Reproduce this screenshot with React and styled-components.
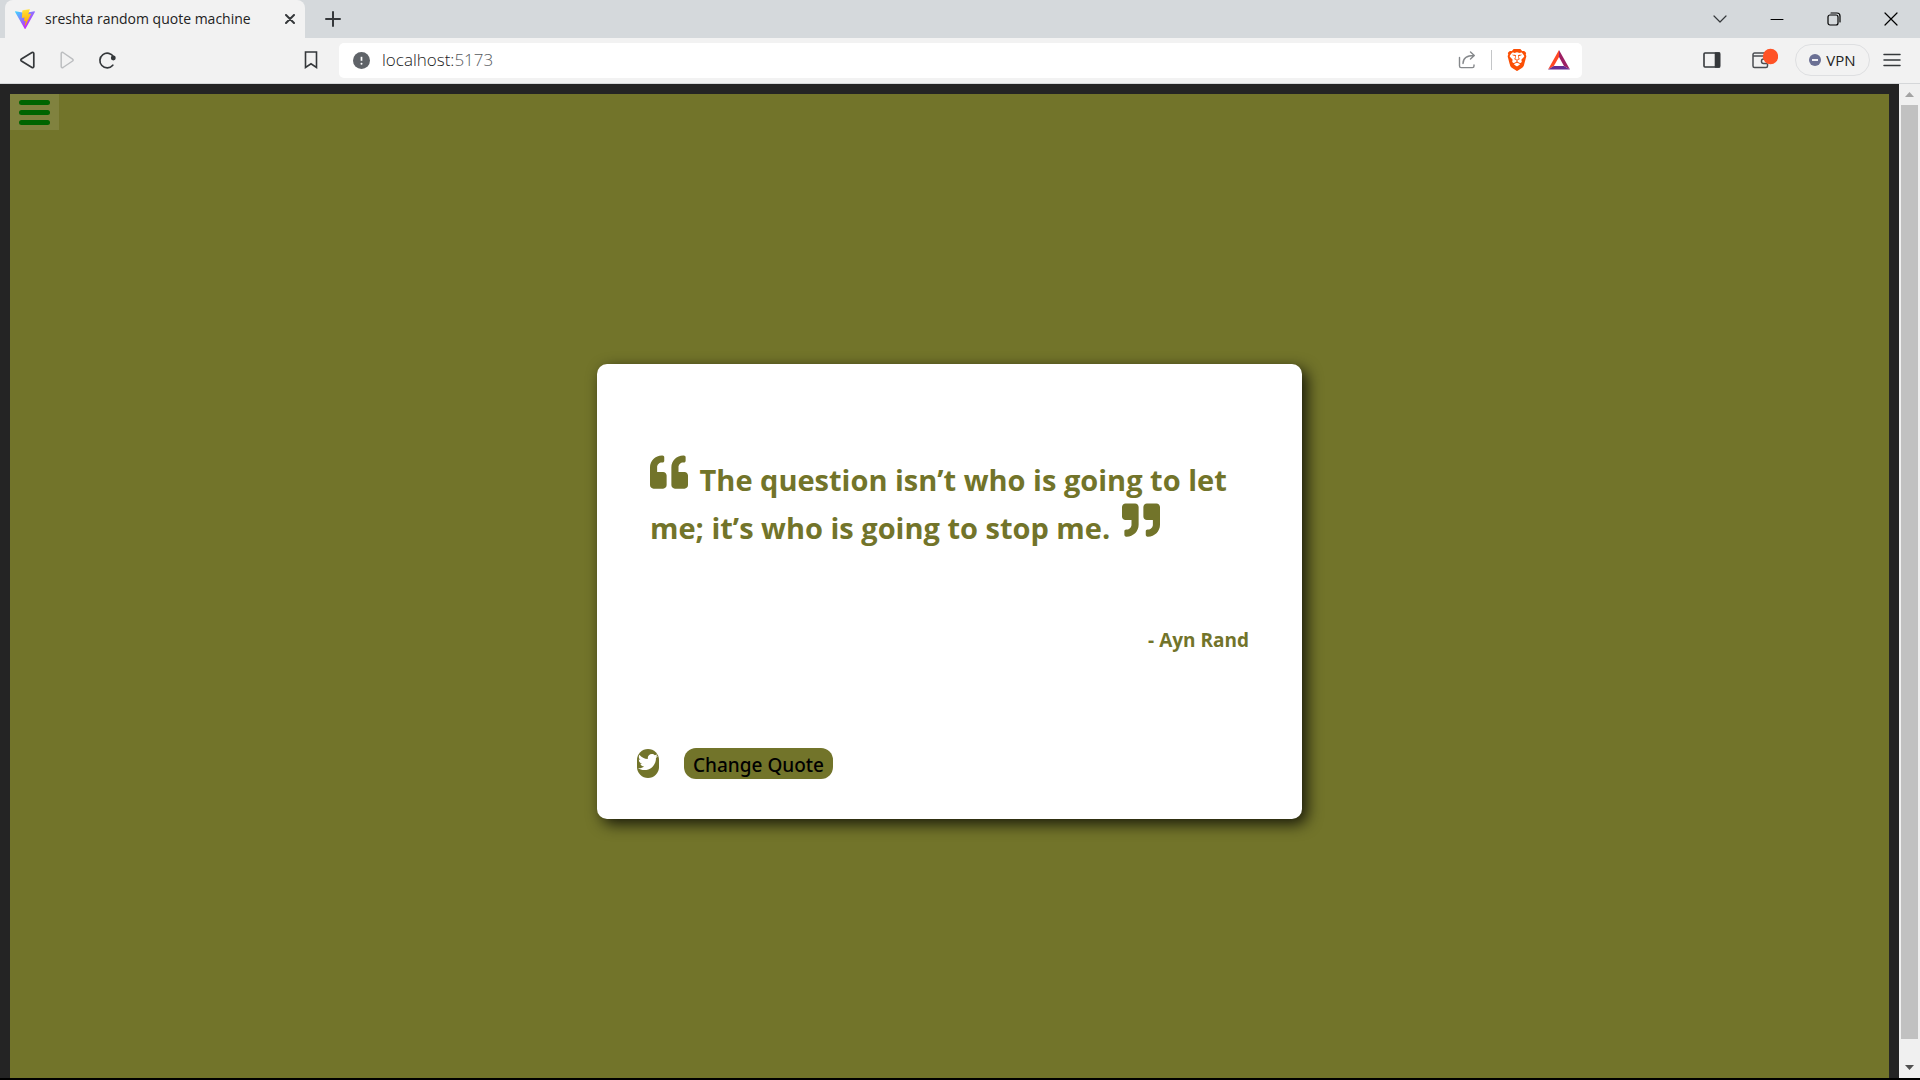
import React from "react";
import styled, { createGlobalStyle } from "styled-components";
import { FaQuoteLeft, FaQuoteRight, FaTwitter } from "react-icons/fa";
import { SiBrave } from "react-icons/si";

const OLIVE = "#72742a";

const GlobalStyle = createGlobalStyle`
  *, *::before, *::after { box-sizing: border-box; }
  body {
    margin: 0;
    font-family: "Open Sans", "Noto Sans", sans-serif;
    background: #000;
  }
  button, input { font: inherit; color: inherit; }
  button { border: 0; padding: 0; background: none; cursor: pointer; }
  svg { display: block; flex: none; }
`;

const Window = styled.div`
  display: flex;
  flex-direction: column;
  height: 100vh;
  padding-bottom: 2px;
  overflow: hidden;
`;

const TabStrip = styled.header`
  display: flex;
  flex: none;
  height: 38px;
  padding: 0 1px 0 5px;
  background: #d5d9dc;
  color: #35383b;
`;

const Tab = styled.div`
  display: flex;
  align-items: center;
  gap: 10px;
  width: 300px;
  padding: 0 10px;
  border-radius: 8px 8px 0 0;
  background: #f2f2f2;
`;

const TabTitle = styled.span`
  flex: 1;
  color: #222;
  font-size: 14px;
  line-height: 20px;
  white-space: nowrap;
`;

const IconButton = styled.button`
  display: grid;
  place-items: center;
  flex: none;
  width: ${(p) => p.$width || 40}px;
  height: ${(p) => p.$height || 36}px;
  color: ${(p) => p.$color || "#35383b"};
`;

const WindowControls = styled.div`
  display: flex;
  margin-left: auto;
  color: #111;
`;

const Toolbar = styled.nav`
  display: flex;
  flex: none;
  align-items: center;
  height: 46px;
  padding: 0 8px 1px 7px;
  border-bottom: 1px solid #d5d7d9;
  background: #f2f2f2;
`;

const NavGroup = styled.div`
  display: flex;
  flex: none;
  width: 284px;
`;

const AddressBar = styled.form`
  display: flex;
  flex: 1;
  align-items: center;
  height: 35px;
  margin: 0 105px 0 8px;
  padding: 0 2px 0 14px;
  border-radius: 5px;
  background: #fff;
`;

const AddressLabel = styled.label`
  position: relative;
  display: flex;
  flex: 1;
  align-items: center;
  gap: 12px;
`;

const AddressInput = styled.input`
  position: absolute;
  inset: 0;
  width: 100%;
  padding: 0 0 0 29px;
  border: 0;
  outline: 0;
  background: transparent;
  color: transparent;
  font-size: 17px;
`;

const AddressText = styled.span`
  color: #222;
  font-size: 17px;
  font-weight: 300;
  line-height: 24px;
`;

const Port = styled.span`
  color: #55595d;
`;

const Divider = styled.span`
  width: 1px;
  height: 20px;
  margin: 0 4px;
  background: #c4c6c8;
`;

const ToolGroup = styled.div`
  display: flex;
  flex: none;
  align-items: center;
`;

const VpnButton = styled.button`
  display: flex;
  align-items: center;
  justify-content: center;
  gap: 5px;
  width: 75px;
  height: 32px;
  margin: 0 2px 0 4px;
  border: 1px solid #dedfe1;
  border-radius: 16px;
  color: #222;
  font-size: 15px;
  line-height: 20px;
`;

const Viewport = styled.div`
  display: flex;
  flex: 1;
  min-height: 0;
  overflow: hidden;
  background: #242424;
`;

const Stage = styled.main`
  display: grid;
  flex: 1;
  place-items: center;
  height: 100%;
  margin: 10px;
  background: ${OLIVE};
`;

const MenuButton = styled.button`
  display: flex;
  grid-area: 1 / 1;
  flex-direction: column;
  align-items: center;
  align-self: start;
  justify-content: center;
  justify-self: start;
  gap: 5px;
  width: 49px;
  height: 36px;
  background: rgba(255, 255, 255, 0.1);
`;

const MenuBar = styled.span`
  width: 31px;
  height: 5px;
  border-radius: 3px;
  background: #006400;
`;

const Card = styled.article`
  grid-area: 1 / 1;
  width: 100%;
  max-width: 705px;
  padding: 40px;
  border-radius: 10px;
  background: #fff;
  color: ${OLIVE};
  box-shadow: 5px 5px 15px rgba(0, 0, 0, 0.8);
`;

const Quote = styled.figure`
  margin: 0;
  padding: 52px 13px 93px;
`;

const QuoteText = styled.blockquote`
  margin: 0 0 73px;
  font-size: 29px;
  font-weight: 700;
  line-height: 48px;

  svg { display: inline; margin-top: -4px; vertical-align: baseline; }
  svg:first-child { margin-right: 4px; }
  svg:last-child { margin-left: 4px; }
`;

const Author = styled.figcaption`
  font-size: 19px;
  font-weight: 700;
  line-height: 30px;
  text-align: right;
`;

const Actions = styled.div`
  display: flex;
  align-items: center;
  gap: 25px;
`;

const TweetLink = styled.a`
  display: block;
  height: 29px;
  padding: 3px 1px;
  border-radius: 11px;
  background: ${OLIVE};
  color: #fff;
`;

const ChangeButton = styled.button`
  height: 31px;
  padding: 3px 9px 0;
  border-radius: 12px;
  background: ${OLIVE};
  color: #000;
  font-family: "Noto Sans", "Open Sans", sans-serif;
  font-size: 19px;
  font-weight: 500;
  line-height: 28px;
`;

const ScrollTrack = styled.div`
  display: flex;
  flex: none;
  flex-direction: column;
  align-items: center;
  width: 21px;
  background: #f0f0f0;
`;

const ScrollArrow = styled.button`
  display: grid;
  place-items: ${(p) => p.$place || "center"};
  width: 100%;
  height: ${(p) => p.$height}px;
  padding-bottom: ${(p) => p.$bottom || 0}px;
`;

const ScrollThumb = styled.div`
  flex: 1;
  width: 17px;
  background: #c1c1c1;
`;

function Stroke({ w, h, width = 1.5, children }) {
  return (
    <svg width={w} height={h} viewBox={`0 0 ${w} ${h}`} fill="none" stroke="currentColor" strokeWidth={width} strokeLinejoin="round" strokeLinecap="round" aria-hidden="true">
      {children}
    </svg>
  );
}

function ViteLogo() {
  return (
    <svg width="20" height="20" viewBox="0 0 256 257" aria-hidden="true">
      <defs>
        <linearGradient id="viteShell" x1="-.828%" x2="57.636%" y1="7.652%" y2="78.411%">
          <stop offset="0%" stopColor="#41D1FF" />
          <stop offset="100%" stopColor="#BD34FE" />
        </linearGradient>
        <linearGradient id="viteBolt" x1="43.376%" x2="50.316%" y1="2.242%" y2="89.03%">
          <stop offset="0%" stopColor="#FFEA83" />
          <stop offset="8.333%" stopColor="#FFDD35" />
          <stop offset="100%" stopColor="#FFA800" />
        </linearGradient>
      </defs>
      <path fill="url(#viteShell)" d="M255.153 37.938L134.897 252.976c-2.483 4.44-8.862 4.466-11.382.048L.875 37.958c-2.746-4.814 1.371-10.646 6.827-9.67l120.385 21.517a6.537 6.537 0 0 0 2.322-.004l117.867-21.483c5.438-.991 9.574 4.796 6.877 9.62Z" />
      <path fill="url(#viteBolt)" d="M185.432.063L96.44 17.501a3.268 3.268 0 0 0-2.634 3.014l-5.474 92.456a3.268 3.268 0 0 0 3.997 3.378l24.777-5.718c2.318-.535 4.413 1.507 3.936 3.838l-7.361 36.047c-.495 2.426 1.782 4.5 4.151 3.78l15.304-4.649c2.372-.72 4.652 1.36 4.15 3.788l-11.698 56.621c-.732 3.542 3.979 5.473 5.943 2.437l1.313-2.028l72.516-144.72c1.215-2.423-.88-5.186-3.54-4.672l-25.505 4.922c-2.396.462-4.435-1.77-3.759-4.114l16.646-57.705c.677-2.35-1.37-4.583-3.769-4.113Z" />
    </svg>
  );
}

function BrowserTabs() {
  return (
    <TabStrip>
      <Tab>
        <ViteLogo />
        <TabTitle>sreshta random quote machine</TabTitle>
        <IconButton $width={10} $height={20} aria-label="Close tab">
          <Stroke w={10} h={10} width={2}><path d="M1 1l8 8M9 1L1 9" /></Stroke>
        </IconButton>
      </Tab>
      <IconButton $width={55} $height={38} aria-label="New tab">
        <Stroke w={16} h={16} width={2}><path d="M8 1v14M1 8h14" /></Stroke>
      </IconButton>
      <WindowControls>
        <IconButton $width={57} $height={38} aria-label="Search tabs">
          <Stroke w={14} h={8} width={1.2}><path d="M1 1l6 6 6-6" /></Stroke>
        </IconButton>
        <IconButton $width={57} $height={38} $color="#000" aria-label="Minimize">
          <Stroke w={14} h={1} width={1}><path d="M1 .5h12" /></Stroke>
        </IconButton>
        <IconButton $width={57} $height={38} $color="#000" aria-label="Restore">
          <Stroke w={14} h={14} width={1.2}>
            <rect x="1" y="3" width="10" height="10" rx="2" />
            <path d="M4 1h6a3 3 0 0 1 3 3v6" />
          </Stroke>
        </IconButton>
        <IconButton $width={57} $height={38} $color="#000" aria-label="Close window">
          <Stroke w={14} h={14} width={1.2}><path d="M1 1l12 12M13 1L1 13" /></Stroke>
        </IconButton>
      </WindowControls>
    </TabStrip>
  );
}

function BrowserToolbar() {
  return (
    <Toolbar>
      <NavGroup>
        <IconButton aria-label="Back">
          <Stroke w={16} h={18} width={1.7}><path d="M13 1.5a1.2 1.2 0 0 1 1.8 1v13a1.2 1.2 0 0 1-1.8 1L2.4 10a1.2 1.2 0 0 1 0-2z" /></Stroke>
        </IconButton>
        <IconButton $color="#bcbec0" aria-label="Forward">
          <Stroke w={16} h={18} width={1.5}><path d="M4 1.5a1.2 1.2 0 0 0-1.8 1v13a1.2 1.2 0 0 0 1.8 1L13.6 10a1.2 1.2 0 0 0 0-2z" /></Stroke>
        </IconButton>
        <IconButton aria-label="Reload">
          <Stroke w={18} h={18} width={1.7}>
            <path d="M14.8 14.2A7.3 7.3 0 1 1 15.6 6" />
            <circle cx="15.3" cy="7" r="1.6" fill="currentColor" />
          </Stroke>
        </IconButton>
      </NavGroup>
      <IconButton aria-label="Bookmark this page">
        <Stroke w={14} h={18} width={1.6}><path d="M1.5 1h11v15.5L7 12.8l-5.5 3.7z" strokeLinejoin="miter" /></Stroke>
      </IconButton>
      <AddressBar onSubmit={(e) => e.preventDefault()}>
        <AddressLabel>
          <svg width="17" height="17" viewBox="0 0 17 17" aria-hidden="true">
            <circle cx="8.5" cy="8.5" r="8.5" fill="#5f6368" />
            <path d="M8.5 4.8v4" stroke="#fff" strokeWidth="1.7" />
            <circle cx="8.5" cy="11.7" r="1" fill="#fff" />
          </svg>
          <AddressText>localhost:<Port>5173</Port></AddressText>
          <AddressInput aria-label="Address" />
        </AddressLabel>
        <IconButton $color="#85888b" aria-label="Share">
          <Stroke w={18} h={18} width={1.4}>
            <path d="M1.5 6.5v8.5a1.6 1.6 0 0 0 1.6 1.6h11.3a1.6 1.6 0 0 0 1.6-1.6v-1" />
            <path d="M5 12.5c0-5 3-8 11-8M12.5 1l3.8 3.5-3.8 3.5" />
          </Stroke>
        </IconButton>
        <Divider />
        <IconButton $width={42} $color="#fb4f05" aria-label="Brave Shields">
          <SiBrave size={22} />
        </IconButton>
        <IconButton $width={42} aria-label="Brave Rewards">
          <svg width="22" height="20" viewBox="0 0 22 20" aria-hidden="true">
            <path d="M11 0v7L5.8 16 0 19.5z" fill="#ff4724" />
            <path d="M11 0l11 19.5L16 16 11 7z" fill="#9e1f63" />
            <path d="M0 19.5L5.8 16H16l6 3.5z" fill="#662d91" />
          </svg>
        </IconButton>
      </AddressBar>
      <ToolGroup>
        <IconButton $width={50} aria-label="Sidebar">
          <Stroke w={18} h={16} width={1.6}>
            <rect x="1" y="1" width="15.5" height="14" rx="1" />
            <path d="M12.5 1h4v14h-4z" fill="currentColor" />
          </Stroke>
        </IconButton>
        <IconButton $width={54} aria-label="Wallet">
          <svg width="28" height="24" viewBox="0 0 28 24" fill="none" aria-hidden="true">
            <path d="M17.5 15.5V18a1.5 1.5 0 0 1-1.5 1.5H4.5A1.5 1.5 0 0 1 3 18V6.5A1.5 1.5 0 0 1 4.5 5H16M3 8h14M17.5 11h-4a2 2 0 0 0-2 2v.5a2 2 0 0 0 2 2h4" stroke="#4b4e52" strokeWidth="1.5" />
            <circle cx="20.5" cy="8.5" r="7.7" fill="#ff5226" />
          </svg>
        </IconButton>
        <VpnButton>
          <svg width="12" height="12" viewBox="0 0 12 12" aria-hidden="true">
            <circle cx="6" cy="6" r="6" fill="#6b7094" />
            <path d="M3 6h6" stroke="#fff" strokeWidth="1.8" />
          </svg>
          VPN
        </VpnButton>
        <IconButton aria-label="Browser menu">
          <Stroke w={18} h={14} width={1.5}><path d="M1 1.5h16M1 7h16M1 12.5h16" /></Stroke>
        </IconButton>
      </ToolGroup>
    </Toolbar>
  );
}

export default function App() {
  return (
    <Window>
      <GlobalStyle />
      <BrowserTabs />
      <BrowserToolbar />
      <Viewport>
        <Stage>
          <MenuButton aria-label="Open menu">
            <MenuBar />
            <MenuBar />
            <MenuBar />
          </MenuButton>
          <Card>
            <Quote>
              <QuoteText>
                <FaQuoteLeft size={38} /> The question isn’t who is going to let me; it’s who is going to stop me. <FaQuoteRight size={38} />
              </QuoteText>
              <Author>- Ayn Rand</Author>
            </Quote>
            <Actions>
              <TweetLink href="#tweet" aria-label="Tweet this quote">
                <FaTwitter size={20} />
              </TweetLink>
              <ChangeButton>Change Quote</ChangeButton>
            </Actions>
          </Card>
        </Stage>
        <ScrollTrack>
          <ScrollArrow $height={21} aria-label="Scroll up">
            <svg width="9" height="5" viewBox="0 0 9 5" aria-hidden="true"><path d="M0 5l4.5-5L9 5z" fill="#a3a3a3" /></svg>
          </ScrollArrow>
          <ScrollThumb />
          <ScrollArrow $height={39} $place="end center" $bottom={8} aria-label="Scroll down">
            <svg width="9" height="5" viewBox="0 0 9 5" aria-hidden="true"><path d="M0 0l4.5 5L9 0z" fill="#505050" /></svg>
          </ScrollArrow>
        </ScrollTrack>
      </Viewport>
    </Window>
  );
}
